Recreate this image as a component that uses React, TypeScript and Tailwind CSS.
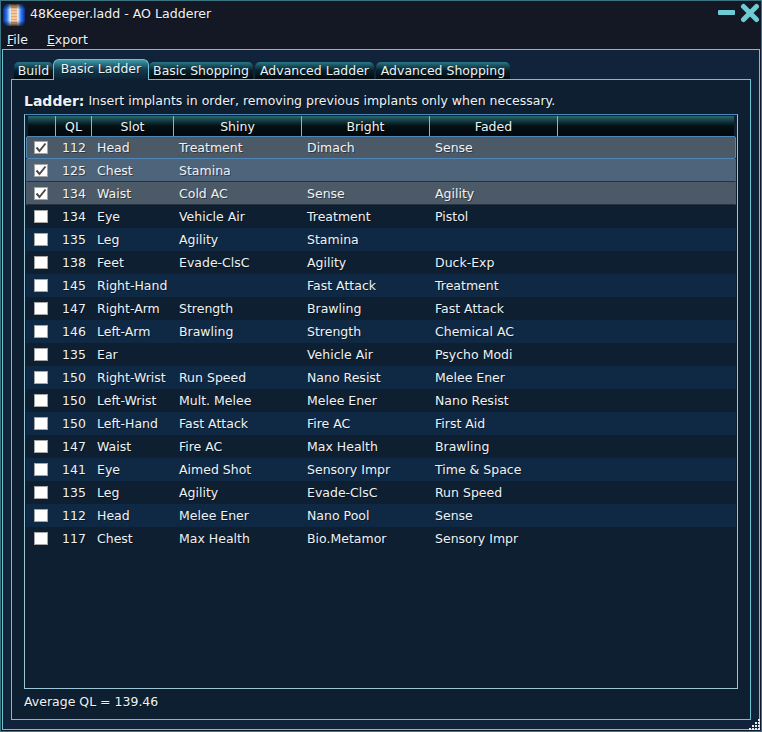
/**
 * AO Ladderer window: title bar, menu, tabs and the basic ladder table.
 */

import React from 'react';

const ladderRows = [
  { ql: 112, slot: 'Head', shiny: 'Treatment', bright: 'Dimach', faded: 'Sense', done: true },
  { ql: 125, slot: 'Chest', shiny: 'Stamina', bright: '', faded: '', done: true },
  { ql: 134, slot: 'Waist', shiny: 'Cold AC', bright: 'Sense', faded: 'Agility', done: true },
  { ql: 134, slot: 'Eye', shiny: 'Vehicle Air', bright: 'Treatment', faded: 'Pistol' },
  { ql: 135, slot: 'Leg', shiny: 'Agility', bright: 'Stamina', faded: '' },
  { ql: 138, slot: 'Feet', shiny: 'Evade-ClsC', bright: 'Agility', faded: 'Duck-Exp' },
  { ql: 145, slot: 'Right-Hand', shiny: '', bright: 'Fast Attack', faded: 'Treatment' },
  { ql: 147, slot: 'Right-Arm', shiny: 'Strength', bright: 'Brawling', faded: 'Fast Attack' },
  { ql: 146, slot: 'Left-Arm', shiny: 'Brawling', bright: 'Strength', faded: 'Chemical AC' },
  { ql: 135, slot: 'Ear', shiny: '', bright: 'Vehicle Air', faded: 'Psycho Modi' },
  { ql: 150, slot: 'Right-Wrist', shiny: 'Run Speed', bright: 'Nano Resist', faded: 'Melee Ener' },
  { ql: 150, slot: 'Left-Wrist', shiny: 'Mult. Melee', bright: 'Melee Ener', faded: 'Nano Resist' },
  { ql: 150, slot: 'Left-Hand', shiny: 'Fast Attack', bright: 'Fire AC', faded: 'First Aid' },
  { ql: 147, slot: 'Waist', shiny: 'Fire AC', bright: 'Max Health', faded: 'Brawling' },
  { ql: 141, slot: 'Eye', shiny: 'Aimed Shot', bright: 'Sensory Impr', faded: 'Time & Space' },
  { ql: 135, slot: 'Leg', shiny: 'Agility', bright: 'Evade-ClsC', faded: 'Run Speed' },
  { ql: 112, slot: 'Head', shiny: 'Melee Ener', bright: 'Nano Pool', faded: 'Sense' },
  { ql: 117, slot: 'Chest', shiny: 'Max Health', bright: 'Bio.Metamor', faded: 'Sensory Impr' },
];

const headerClass =
  'flex items-center justify-center border-r border-[#6cc3d2] bg-gradient-to-b from-[#2b6a72] via-[#031014] via-50% to-[#02080b] pt-[2px]';

function AppIcon() {
  return (
    <svg width="24" height="24" viewBox="0 0 24 24" className="shrink-0">
      <defs>
        <linearGradient id="glow" x1="0" y1="0" x2="1" y2="0">
          <stop offset="0%" stopColor="#0a2a90" />
          <stop offset="18%" stopColor="#2f7cf5" />
          <stop offset="32%" stopColor="#d8ecff" />
          <stop offset="68%" stopColor="#d8ecff" />
          <stop offset="82%" stopColor="#2f7cf5" />
          <stop offset="100%" stopColor="#0a2a90" />
        </linearGradient>
        <linearGradient id="fade" x1="0" y1="0" x2="0" y2="1">
          <stop offset="0%" stopColor="#000" stopOpacity="0.7" />
          <stop offset="25%" stopColor="#000" stopOpacity="0" />
          <stop offset="75%" stopColor="#000" stopOpacity="0" />
          <stop offset="100%" stopColor="#000" stopOpacity="0.7" />
        </linearGradient>
      </defs>
      <rect x="2" y="2" width="22" height="22" rx="5" fill="url(#glow)" />
      <rect x="10" y="2" width="6" height="22" fill="#e8a468" />
      <path d="M10 4h6M10 7h6M10 10h6M10 13h6M10 16h6M10 19h6M10 22h6" stroke="#fff0d8" strokeWidth="1" />
      <rect x="2" y="2" width="22" height="22" rx="5" fill="url(#fade)" />
    </svg>
  );
}

function WindowButtons() {
  return (
    <div className="flex items-center gap-[5px] pr-[1px] pb-[2px]">
      <div className="h-[5px] w-[17px] rounded-[1px] bg-[#6ccbd3]" />
      <svg width="20" height="20" viewBox="0 0 20 20">
        <path d="M3.5 3.5L16.5 16.5M16.5 3.5L3.5 16.5" stroke="#6ccbd3" strokeWidth="5" strokeLinecap="round" />
      </svg>
    </div>
  );
}

function Tab({ label, width, active }: { label: string; width: string; active?: boolean }) {
  if (active) {
    return (
      <div
        className={`${width} z-10 -mb-px flex h-[21px] items-start justify-center rounded-t-[6px] border-x border-t border-[#6cc3d2] bg-gradient-to-b from-[#3f9aa8] via-[#123a4e] via-50% to-[#0d1f31] pt-[3px]`}
      >
        {label}
      </div>
    );
  }
  return (
    <div
      className={`${width} flex h-[17px] items-center justify-center rounded-t-[5px] bg-gradient-to-b from-[#2a7886] via-[#06222c] via-50% to-[#020a0e] pt-[1px]`}
    >
      {label}
    </div>
  );
}

function CheckBox({ checked }: { checked?: boolean }) {
  return (
    <div className="flex h-[13px] w-[14px] items-center justify-center border border-[#a4a4a4] bg-white">
      {checked && (
        <svg width="12" height="11" viewBox="0 0 12 11">
          <path d="M1.5 5.5L4.5 9L10.5 1.5" fill="none" stroke="#4c4c4c" strokeWidth="2" />
        </svg>
      )}
    </div>
  );
}

function LadderRow({ row, index }: { row: (typeof ladderRows)[number]; index: number }) {
  const odd = index % 2 === 1;
  let tone = odd ? 'bg-[#0d1f31]' : 'bg-[#0f2944]';
  if (row.done) {
    tone = index === 1 ? 'bg-[#4d647a]' : 'bg-[#4c5a68]';
  }
  let edge = 'border border-transparent';
  if (index === 0) edge = 'border border-[#4f86b8] rounded-[2px]';
  else if (row.done) edge = 'border border-transparent border-b-[#26323e]';
  return (
    <div className={`grid h-[23px] grid-cols-[29px_36px_82px_128px_128px_1fr] items-center ${tone} ${edge}`}>
      <div className="flex justify-center pr-[2px] pb-[1px]">
        <CheckBox checked={row.done} />
      </div>
      <div className="pt-[2px] text-center">{row.ql}</div>
      <div className="pl-[5px] pt-[2px]">{row.slot}</div>
      <div className="pl-[5px] pt-[2px]">{row.shiny}</div>
      <div className="pl-[5px] pt-[2px]">{row.bright}</div>
      <div className="pl-[5px] pt-[2px]">{row.faded}</div>
    </div>
  );
}

function LadderTable() {
  return (
    <div className="flex h-[575px] flex-col border border-[#4f86b8] border-r-[#9cc6d4] border-b-[#9cc6d4] border-l-[#9cc6d4] px-px pt-px">
      <div className="mx-[2px] grid h-[20px] w-[706px] shrink-0 grid-cols-[28px_36px_82px_128px_128px_128px_1fr] bg-black">
        <div className={headerClass} />
        <div className={headerClass}>QL</div>
        <div className={headerClass}>Slot</div>
        <div className={headerClass}>Shiny</div>
        <div className={headerClass}>Bright</div>
        <div className={headerClass}>Faded</div>
        <div className={`${headerClass} border-r-0`} />
      </div>
      <div className="flex flex-col">
        {ladderRows.map((row, i) => (
          <LadderRow key={i} row={row} index={i} />
        ))}
      </div>
    </div>
  );
}

export default function App() {
  return (
    <div
      className="relative flex h-[732px] w-[762px] flex-col border border-[#3d7482] bg-[#141824] text-[12.5px] leading-none text-[#eef2f4] [text-shadow:1px_1px_0_rgba(0,0,0,0.4)]"
      style={{ fontFamily: '"DejaVu Sans", sans-serif' }}
    >
      <div className="flex h-[25px] shrink-0 items-center justify-between">
        <div className="flex items-center gap-[5px]">
          <AppIcon />
          <span className="pt-[1px] text-[12.6px]">48Keeper.ladd - AO Ladderer</span>
        </div>
        <WindowButtons />
      </div>
      <div className="flex h-[23px] shrink-0 items-center gap-[19px] pl-[6px] pt-[5px]">
        <span>
          <u>F</u>ile
        </span>
        <span>
          <u>E</u>xport
        </span>
      </div>
      <div className="mx-px mb-px flex min-h-0 flex-1 flex-col border border-[#6cc3d2] bg-[#10233b] px-[8px] pb-[9px]">
        <div className="flex h-[29px] shrink-0 items-end pl-[3px]">
          <Tab label="Build" width="w-[39px]" />
          <Tab label="Basic Ladder" width="w-[96px]" active />
          <Tab label="Basic Shopping" width="w-[104px]" />
          <div className="w-[2px]" />
          <Tab label="Advanced Ladder" width="w-[119px]" />
          <div className="w-[2px]" />
          <Tab label="Advanced Shopping" width="w-[134px]" />
        </div>
        <div className="flex min-h-0 flex-1 flex-col border border-[#6cc3d2] bg-[#0d1f31] px-[12px]">
          <div className="flex h-[34px] shrink-0 items-center gap-[4px] pt-[8px]">
            <b className="text-[14px]">Ladder:</b>
            <span>Insert implants in order, removing previous implants only when necessary.</span>
          </div>
          <LadderTable />
          <div className="pt-[7px]">Average QL = 139.46</div>
        </div>
      </div>
      <svg width="11" height="11" viewBox="0 0 11 11" className="absolute bottom-px right-px">
        <path
          d="M9 0h2v2H9zM6 3h2v2H6zM9 3h2v2H9zM3 6h2v2H3zM6 6h2v2H6zM9 6h2v2H9zM0 9h2v2H0zM3 9h2v2H3zM6 9h2v2H6zM9 9h2v2H9z"
          fill="#e4eef2"
        />
      </svg>
    </div>
  );
}
